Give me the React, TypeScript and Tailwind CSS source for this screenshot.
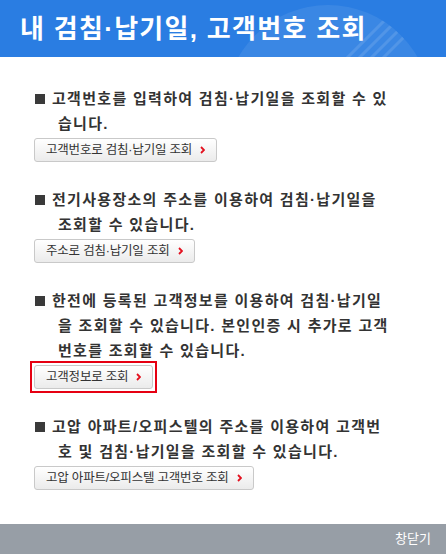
import React from 'react';

const FONT = '"Liberation Sans", "Noto Sans CJK KR", sans-serif';

const sections = [
  {
    lines: ['고객번호를 입력하여 검침·납기일을 조회할 수 있', '습니다.'],
    button: '고객번호로 검침·납기일 조회',
  },
  {
    lines: ['전기사용장소의 주소를 이용하여 검침·납기일을', '조회할 수 있습니다.'],
    button: '주소로 검침·납기일 조회',
  },
  {
    lines: [
      '한전에 등록된 고객정보를 이용하여 검침·납기일',
      '을 조회할 수 있습니다. 본인인증 시 추가로 고객',
      '번호를 조회할 수 있습니다.',
    ],
    button: '고객정보로 조회',
    active: true,
  },
  {
    lines: ['고압 아파트/오피스텔의 주소를 이용하여 고객번', '호 및 검침·납기일을 조회할 수 있습니다.'],
    button: '고압 아파트/오피스텔 고객번호 조회',
  },
];

const Chevron = () => (
  <svg width="5" height="8" viewBox="0 0 5 8" className="shrink-0">
    <polyline points="1,1 4,4 1,7" fill="none" stroke="#e3101e" strokeWidth="1.8" />
  </svg>
);

const App = () => {
  return (
    <div className="w-[446px] h-[554px] flex flex-col bg-white" style={{ fontFamily: FONT }}>
      {/* header */}
      <div className="relative h-[57px] shrink-0 overflow-hidden bg-[#2a7de2] flex items-center px-[20px]">
        <svg className="absolute left-[225px] top-0" width="210" height="57" viewBox="0 0 210 57">
          <defs>
            <clipPath id="circ">
              <circle cx="103" cy="108" r="103" />
            </clipPath>
          </defs>
          <circle cx="103" cy="108" r="103" fill="#ffffff" fillOpacity="0.08" />
          <g clipPath="url(#circ)" stroke="#ffffff" strokeOpacity="0.12" strokeWidth="3">
            <line x1="110" y1="70" x2="180" y2="0" />
            <line x1="122" y1="70" x2="192" y2="0" />
            <line x1="134" y1="70" x2="204" y2="0" />
            <line x1="146" y1="70" x2="216" y2="0" />
          </g>
        </svg>
        <h1 className="relative text-white text-[26px] font-bold tracking-[1.3px] leading-none">
          내 검침·납기일, 고객번호 조회
        </h1>
      </div>

      {/* content */}
      <div className="flex flex-col gap-[25px] pt-[29px] pl-[34px]">
        {sections.map((s, i) => (
          <div key={i} className="flex flex-col items-start">
            <div className="text-[15px] leading-[25px] font-bold text-[#333] tracking-[1.3px] whitespace-nowrap">
              {s.lines.map((l, j) =>
                j === 0 ? (
                  <div key={j} className="flex items-center">
                    <span className="inline-block w-[10px] h-[10px] bg-[#3a3a3a] mr-[7px] ml-[1px]" />
                    <span>{l}</span>
                  </div>
                ) : (
                  <div key={j} className="pl-[24px]">
                    {l}
                  </div>
                )
              )}
            </div>
            <div className="relative mt-[2px]">
              <button className="h-[24px] px-[11px] flex items-center gap-[8px] rounded-[3px] border border-[#c9c9c9] bg-gradient-to-b from-white to-[#ebebeb] text-[12.5px] text-[#333] tracking-[-0.2px]">
                <span>{s.button}</span>
                <Chevron />
              </button>
              {s.active && (
                <span className="pointer-events-none absolute -inset-[4px] border-2 border-[#e60012]" />
              )}
            </div>
          </div>
        ))}
      </div>

      {/* footer */}
      <div className="mt-auto h-[30px] shrink-0 bg-[#979ea6] flex items-center justify-end pr-[15px]">
        <span className="text-white text-[13px]">창닫기</span>
      </div>
    </div>
  );
};

export default App;
